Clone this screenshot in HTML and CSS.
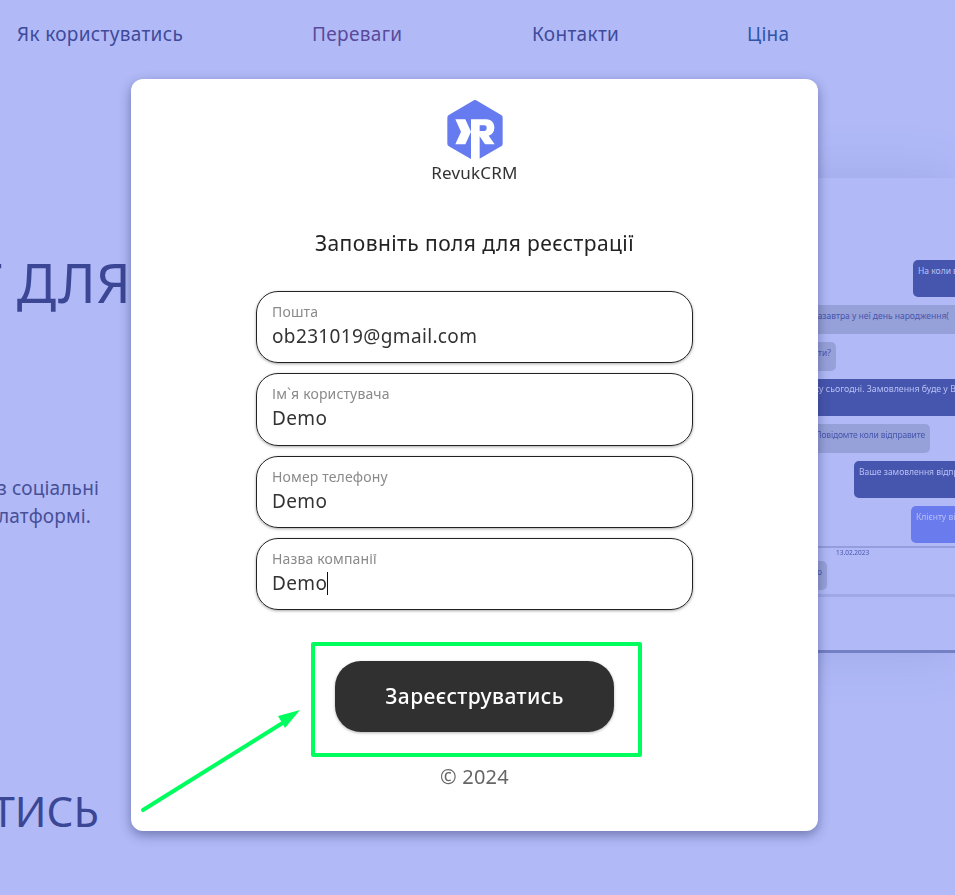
FILE: index.html
```html
<!DOCTYPE html>
<html lang="uk">
<head>
  <meta charset="UTF-8" />
  <meta name="viewport" content="width=device-width, initial-scale=1.0" />
  <title>Реєстрація | RevukCRM</title>
  <link rel="stylesheet" href="styles.css">
</head>
<body>
  <!-- Landing page behind the modal -->
  <div class="page">
    <nav class="top-nav">
      <a href="#">Як користуватись</a>
      <a href="#" class="nav-purple">Переваги</a>
      <a href="#">Контакти</a>
      <a href="#" class="nav-blue">Ціна</a>
    </nav>

    <main class="hero">
      <section class="hero-copy">
        <h1>ЧАТ-БОТ ДЛЯ</h1>
        <p class="hero-line">Зберіть всі повідомлення з соціальні</p>
        <p class="hero-line hero-line-short">мереж на одній платформі.</p>
        <a href="#" class="hero-cta">ЗАРЕЄСТРУВАТИСЬ</a>
      </section>

      <section class="chat">
        <div class="bubble out dark b1">На коли вам потрібно</div>
        <div class="bubble in b2">Доставте будь ласка зазавтра у неї день народження(</div>
        <div class="bubble in b3">Можете відправити?</div>
        <div class="bubble out dark b4">Відправимо доставку сьогодні. Замовлення буде у Вас завтра</div>
        <div class="bubble in b5">Повідомте коли відправите</div>
        <div class="bubble out dark b6">Ваше замовлення відправлено</div>
        <div class="bubble out bright b7">Клієнту відправлено</div>
        <div class="chat-date">13.02.2023</div>
        <div class="bubble in b8">Добре, дякую</div>
        <div class="chat-input"></div>
      </section>
    </main>
  </div>

  <!-- Registration modal -->
  <form class="modal">
    <div class="logo">
      <svg class="logo-mark" viewBox="140 27 168 183" aria-hidden="true">
        <path class="logo-hex" d="M224 36 L298 80 V158 L224 201 L150 158 V80 Z" />
        <path class="logo-white" d="M165 85 H195 L212 122 L195 160 H165 L182 122 Z" />
        <path class="logo-white" fill-rule="evenodd" d="M212 85 H258 C274 85 282 97 282 110 C282 122 276 130 265 134 L283 160 H254 L238 136 V212 H212 Z M238 103 V120 H252 C257 120 259 116 259 111 C259 106 257 103 252 103 Z" />
      </svg>
      <span class="logo-name">RevukCRM</span>
    </div>

    <h2 class="modal-title">Заповніть поля для реєстрації</h2>

    <div class="fields">
      <div class="field">
        <span class="field-label">Пошта</span>
        <span class="field-value">ob231019@gmail.com</span>
      </div>
      <div class="field">
        <span class="field-label">Ім`я користувача</span>
        <span class="field-value">Demo</span>
      </div>
      <div class="field">
        <span class="field-label">Номер телефону</span>
        <span class="field-value">Demo</span>
      </div>
      <div class="field">
        <span class="field-label">Назва компанії</span>
        <span class="field-value">Demo<i class="caret"></i></span>
      </div>
    </div>

    <button type="button" class="submit-btn">Зареєструватись</button>
    <p class="copyright">© 2024</p>
  </form>

  <!-- Green annotation drawn over the screenshot -->
  <div class="mark-box"></div>
  <svg class="mark-arrow" viewBox="0 0 170 110" aria-hidden="true">
    <line x1="3" y1="102" x2="149" y2="11" />
    <polygon points="160,2 138,8 145,20" />
  </svg>
</body>
</html>
```

FILE: styles.css
```css
/* Global Styles */
* {
  margin: 0;
  padding: 0;
  box-sizing: border-box;
  font-family: 'Noto Sans', 'Open Sans', sans-serif;
}

html,
body {
  height: 100%;
  overflow: hidden;
}

body {
  background-color: #b1baf7;
  color: #3f4a9b;
}

a {
  text-decoration: none;
  color: inherit;
}

/* Landing page */
.page {
  height: 895px;
  overflow: hidden;
}

.top-nav {
  display: grid;
  grid-template-columns: 295px 220px 215px 1fr;
  padding: 21px 0 0 17px;
  height: 68px;
  font-size: 19px;
  letter-spacing: 0.33px;
  line-height: 26px;
  color: #3f4a9b;
}

.nav-purple {
  color: #5a4a9c;
}

.nav-blue {
  color: #2f55a8;
}

.hero {
  display: flex;
  justify-content: space-between;
}

/* the copy is wider than the gap left of the modal, so it gets cut on the left */
.hero-copy {
  width: 131px;
  display: flex;
  flex-direction: column;
  align-items: flex-end;
  white-space: nowrap;
}

.hero-copy h1 {
  margin-top: 178px;
  font-size: 54px;
  letter-spacing: 0.4px;
  font-weight: 400;
  line-height: 72px;
  color: #3b4695;
}

.hero-line {
  padding-right: 32px;
  font-size: 19px;
  letter-spacing: 0.15px;
  line-height: 28px;
  color: #494f97;
}

.hero-line:first-of-type {
  margin-top: 156px;
}

.hero-line-short {
  padding-right: 40px;
}

.hero-cta {
  margin-top: 251px;
  padding-right: 32px;
  font-size: 42px;
  line-height: 60px;
  color: #3b4695;
}

/* Blurred chat screenshot, mostly under the modal */
.chat {
  width: 255px;
  height: 475px;
  margin-top: 110px;
  padding-top: 82px;
  display: flex;
  flex-direction: column;
  gap: 8px;
  overflow: hidden;
  border-bottom: 3px solid #7480c4;
  box-shadow: 0 0 50px rgba(70, 85, 173, 0.18);
  background-color: #b1baf7;
  filter: blur(0.4px);
}

.bubble {
  flex: none;
  height: 29px;
  padding: 4px 5px;
  border-radius: 5px;
  font-size: 8.5px;
  line-height: 13px;
  white-space: nowrap;
  overflow: hidden;
}

.bubble.in {
  background-color: #97a1d9;
  color: #4655ad;
}

.bubble.out {
  height: 37px;
  color: #b8c0f7;
}

.bubble.dark {
  background-color: #4655ad;
}

.bubble.bright {
  background-color: #6a7bee;
}

.b1 { margin-left: 213px; width: 80px; }
.b2 { width: 300px; padding-left: 28px; }
.b3 { width: 136px; text-align: right; }
.b4 { width: 300px; padding-left: 32px; font-size: 8.8px; }
.b5 { width: 230px; text-align: right; letter-spacing: -0.15px; }
.b6 { margin-left: 154px; width: 200px; }
.b7 { margin-left: 211px; width: 120px; }
.b8 { width: 127px; margin-top: -8px; text-align: right; }

.chat-date {
  flex: none;
  height: 15px;
  margin-top: -5px;
  border-top: 2px solid #949dde;
  padding-left: 136px;
  font-size: 6.5px;
  line-height: 10px;
  color: #4655ad;
}

.chat-input {
  flex: none;
  margin-top: -4px;
  height: 3px;
  background-color: #a0a9e6;
}

/* Modal */
.modal {
  position: absolute;
  top: 79px;
  left: 131px;
  width: 687px;
  height: 752px;
  padding-top: 21px;
  display: flex;
  flex-direction: column;
  align-items: center;
  background-color: #ffffff;
  border-radius: 12px;
  box-shadow: 0 4px 12px rgba(30, 35, 90, 0.45);
  color: #222;
}

.logo {
  display: flex;
  flex-direction: column;
  align-items: center;
}

.logo-mark {
  display: block;
  width: 56px;
  height: 61px;
  margin-left: 1px;
}

.logo-hex {
  fill: #667bef;
  stroke: #667bef;
  stroke-width: 18;
  stroke-linejoin: round;
}

.logo-white {
  fill: #ffffff;
}

.logo-name {
  font-size: 17px;
  letter-spacing: 0.2px;
  line-height: 24px;
  color: #333;
}

.modal-title {
  margin-top: 43px;
  font-size: 21px;
  letter-spacing: 0.42px;
  font-weight: 400;
  line-height: 30px;
  color: #222;
}

.fields {
  margin-top: 33px;
  display: flex;
  flex-direction: column;
  gap: 10px;
}

.field {
  width: 437px;
  height: 72.3px;
  padding: 10px 15px 0;
  display: flex;
  flex-direction: column;
  border: 1px solid #222;
  border-radius: 22px;
  box-shadow: 0 1px 3px rgba(0, 0, 0, 0.35);
}

.field-label {
  font-size: 14px;
  letter-spacing: 0.15px;
  line-height: 20px;
  color: #8a8a8a;
}

.field-value {
  font-size: 19px;
  letter-spacing: 0.36px;
  line-height: 28px;
  color: #333;
}

.caret {
  display: inline-block;
  width: 1px;
  height: 23px;
  margin-bottom: -5px;
  background-color: #111;
}

.submit-btn {
  margin-top: 51px;
  width: 279px;
  height: 71px;
  padding-bottom: 2px;
  border: none;
  border-radius: 26px;
  background-color: #2f302f;
  color: #ffffff;
  font-size: 21px;
  letter-spacing: 0.4px;
  font-weight: 500;
  box-shadow: 0 1px 3px rgba(0, 0, 0, 0.3);
  cursor: pointer;
}

.copyright {
  margin-top: 31px;
  font-size: 20px;
  letter-spacing: 0.2px;
  line-height: 28px;
  color: #666;
}

/* Annotation */
.mark-box {
  position: absolute;
  top: 642px;
  left: 311px;
  width: 331px;
  height: 115px;
  border: 4px solid #00ff5e;
  border-radius: 2px;
}

.mark-arrow {
  position: absolute;
  top: 708px;
  left: 140px;
  width: 170px;
  height: 110px;
}

.mark-arrow line {
  stroke: #00ff5e;
  stroke-width: 4;
  stroke-linecap: round;
}

.mark-arrow polygon {
  fill: #00ff5e;
}
```
